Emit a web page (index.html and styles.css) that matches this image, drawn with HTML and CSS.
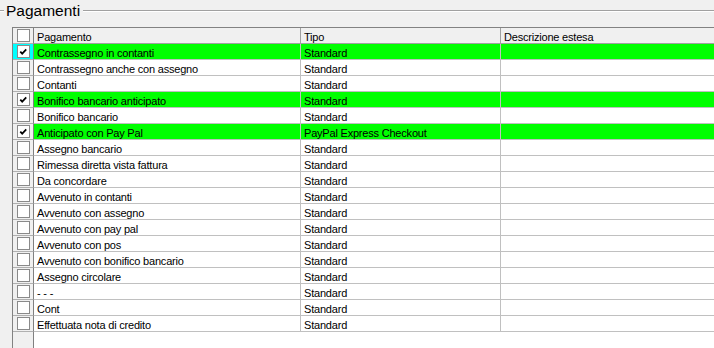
FILE: index.html
```html
<!DOCTYPE html>
<html lang="it">
<head>
<meta charset="utf-8">
<title>Pagamenti</title>
<link rel="stylesheet" href="styles.css">
</head>
<body>
<div class="group">
  <div class="legend">
    <span class="rule rule-short"></span>
    <span class="title">Pagamenti</span>
    <span class="rule rule-long"></span>
  </div>
  <div class="grid">
    <div class="row head">
      <div class="cell chk"><span class="box"></span></div>
      <div class="cell">Pagamento</div>
      <div class="cell">Tipo</div>
      <div class="cell">Descrizione estesa</div>
    </div>
    <div class="row on">
      <div class="cell chk focus"><span class="box"><svg viewBox="0 0 12 12" width="12" height="12"><polyline points="2.5,5.5 4.6,7.8 9,3.2" fill="none" stroke="#000" stroke-width="1.9"/></svg></span></div>
      <div class="cell">Contrassegno in contanti</div>
      <div class="cell">Standard</div>
      <div class="cell"></div>
    </div>
    <div class="row">
      <div class="cell chk"><span class="box"></span></div>
      <div class="cell">Contrassegno anche con assegno</div>
      <div class="cell">Standard</div>
      <div class="cell"></div>
    </div>
    <div class="row">
      <div class="cell chk"><span class="box"></span></div>
      <div class="cell">Contanti</div>
      <div class="cell">Standard</div>
      <div class="cell"></div>
    </div>
    <div class="row on">
      <div class="cell chk"><span class="box"><svg viewBox="0 0 12 12" width="12" height="12"><polyline points="2.5,5.5 4.6,7.8 9,3.2" fill="none" stroke="#000" stroke-width="1.9"/></svg></span></div>
      <div class="cell">Bonifico bancario anticipato</div>
      <div class="cell">Standard</div>
      <div class="cell"></div>
    </div>
    <div class="row">
      <div class="cell chk"><span class="box"></span></div>
      <div class="cell">Bonifico bancario</div>
      <div class="cell">Standard</div>
      <div class="cell"></div>
    </div>
    <div class="row on">
      <div class="cell chk"><span class="box"><svg viewBox="0 0 12 12" width="12" height="12"><polyline points="2.5,5.5 4.6,7.8 9,3.2" fill="none" stroke="#000" stroke-width="1.9"/></svg></span></div>
      <div class="cell">Anticipato con Pay Pal</div>
      <div class="cell">PayPal Express Checkout</div>
      <div class="cell"></div>
    </div>
    <div class="row">
      <div class="cell chk"><span class="box"></span></div>
      <div class="cell">Assegno bancario</div>
      <div class="cell">Standard</div>
      <div class="cell"></div>
    </div>
    <div class="row">
      <div class="cell chk"><span class="box"></span></div>
      <div class="cell">Rimessa diretta vista fattura</div>
      <div class="cell">Standard</div>
      <div class="cell"></div>
    </div>
    <div class="row">
      <div class="cell chk"><span class="box"></span></div>
      <div class="cell">Da concordare</div>
      <div class="cell">Standard</div>
      <div class="cell"></div>
    </div>
    <div class="row">
      <div class="cell chk"><span class="box"></span></div>
      <div class="cell">Avvenuto in contanti</div>
      <div class="cell">Standard</div>
      <div class="cell"></div>
    </div>
    <div class="row">
      <div class="cell chk"><span class="box"></span></div>
      <div class="cell">Avvenuto con assegno</div>
      <div class="cell">Standard</div>
      <div class="cell"></div>
    </div>
    <div class="row">
      <div class="cell chk"><span class="box"></span></div>
      <div class="cell">Avvenuto con pay pal</div>
      <div class="cell">Standard</div>
      <div class="cell"></div>
    </div>
    <div class="row">
      <div class="cell chk"><span class="box"></span></div>
      <div class="cell">Avvenuto con pos</div>
      <div class="cell">Standard</div>
      <div class="cell"></div>
    </div>
    <div class="row">
      <div class="cell chk"><span class="box"></span></div>
      <div class="cell">Avvenuto con bonifico bancario</div>
      <div class="cell">Standard</div>
      <div class="cell"></div>
    </div>
    <div class="row">
      <div class="cell chk"><span class="box"></span></div>
      <div class="cell">Assegno circolare</div>
      <div class="cell">Standard</div>
      <div class="cell"></div>
    </div>
    <div class="row">
      <div class="cell chk"><span class="box"></span></div>
      <div class="cell">- - -</div>
      <div class="cell">Standard</div>
      <div class="cell"></div>
    </div>
    <div class="row">
      <div class="cell chk"><span class="box"></span></div>
      <div class="cell">Cont</div>
      <div class="cell">Standard</div>
      <div class="cell"></div>
    </div>
    <div class="row">
      <div class="cell chk"><span class="box"></span></div>
      <div class="cell">Effettuata nota di credito</div>
      <div class="cell">Standard</div>
      <div class="cell"></div>
    </div>
    <div class="row filler">
      <div class="cell chk"></div>
      <div class="cell"></div>
      <div class="cell"></div>
      <div class="cell"></div>
    </div>
  </div>
</div>
</body>
</html>
```

FILE: styles.css
```css
html, body {
  margin: 0;
  padding: 0;
  background: #f0f0f0;
  overflow: hidden;
  width: 714px;
  height: 348px;
}
body {
  font-family: "Liberation Sans", Arial, sans-serif;
  color: #000;
}
.group {
  width: 714px;
  height: 348px;
  overflow: hidden;
  display: flex;
  flex-direction: column;
}
.legend {
  display: flex;
  align-items: flex-start;
  height: 27px;
  flex: none;
}
.rule {
  display: block;
  height: 0;
  margin-top: 10px;
  border-top: 1px solid #a0a0a0;
  border-bottom: 1px solid #ffffff;
}
.rule-short {
  width: 4px;
}
.rule-long {
  flex: 1;
}
.title {
  font-size: 15.5px;
  line-height: 20px;
  padding-top: 1px;
  margin: 0 3px 0 2px;
}
.grid {
  flex: 1;
  min-height: 0;
  margin-left: 12px;
  border-left: 1px solid #828282;
  border-top: 1px solid #828282;
  background: #ffffff;
  display: flex;
  flex-direction: column;
  overflow: hidden;
}
.row {
  display: grid;
  grid-template-columns: 21px 267px 200px 1fr;
  height: 16px;
  flex: none;
}
.cell {
  box-sizing: border-box;
  height: 16px;
  border-right: 1px solid #c0c0c0;
  border-bottom: 1px solid #c0c0c0;
  padding: 3px 0 0 3px;
  font-size: 11px;
  line-height: 12px;
  letter-spacing: -0.2px;
  white-space: nowrap;
  overflow: hidden;
}
.cell:last-child {
  border-right: none;
}
.head .cell {
  background: #f0f0f0;
  border-right-color: #a0a0a0;
  border-bottom-color: #a0a0a0;
}
.on .cell {
  background: #00ff00;
}
.cell.chk {
  background: #f0f0f0;
  padding: 0;
  display: flex;
  align-items: center;
  justify-content: center;
  border-right-color: #808080;
  border-bottom-color: #b0b0b0;
}
.on .cell.chk {
  background: #f0f0f0;
}
.cell.chk.focus,
.on .cell.chk.focus {
  background: #00ffff;
}
.box {
  box-sizing: border-box;
  width: 13px;
  height: 13px;
  border: 1px solid #8a8a8a;
  background: #ffffff;
  display: flex;
  align-items: center;
  justify-content: center;
}
.box svg {
  display: block;
}
.row.filler {
  flex: 1;
  height: auto;
}
.filler .cell {
  height: auto;
  border-bottom: none;
  background: #ffffff;
}
.filler .cell:not(.chk) {
  border-right: none;
}
.filler .cell.chk {
  background: #f0f0f0;
  border-right-color: #808080;
}
```
